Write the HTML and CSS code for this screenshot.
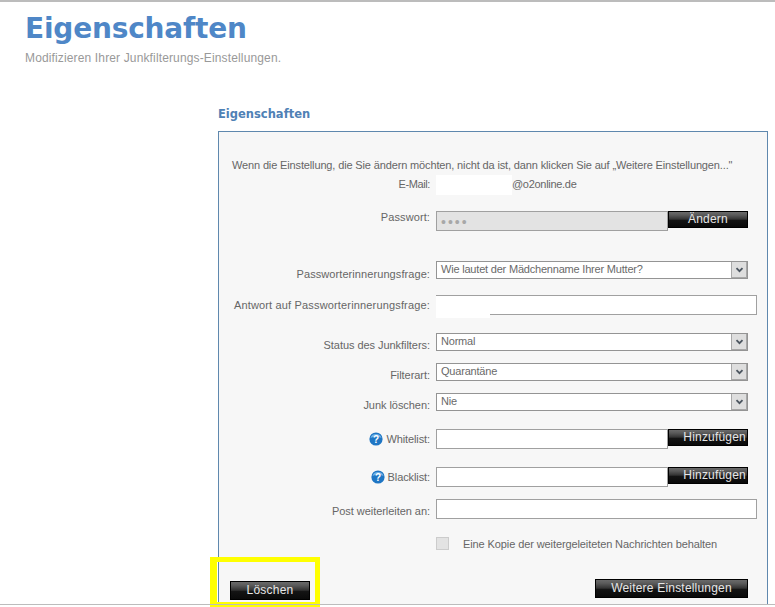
FILE: index.html
```html
<!DOCTYPE html>
<html lang="de">
<head>
<meta charset="utf-8">
<title>Eigenschaften</title>
<link rel="stylesheet" href="styles.css">
</head>
<body>
<header class="page-head">
  <h1>Eigenschaften</h1>
  <p>Modifizieren Ihrer Junkfilterungs-Einstellungen.</p>
</header>
<main class="content">
  <h2>Eigenschaften</h2>
  <form class="panel">
    <p class="intro">Wenn die Einstellung, die Sie ändern möchten, nicht da ist, dann klicken Sie auf „Weitere Einstellungen..."</p>

    <div class="row r-email">
      <label>E-Mail:</label>
      <div class="ctl"><span class="blank-mail"></span><span class="domain">@o2online.de</span></div>
    </div>
    <div class="row r-pass">
      <label>Passwort:</label>
      <div class="ctl"><div class="field short disabled">••••</div><button type="button" class="btn side">Ändern</button></div>
    </div>
    <div class="row r-q">
      <label>Passworterinnerungsfrage:</label>
      <div class="ctl"><div class="select"><span>Wie lautet der Mädchenname Ihrer Mutter?</span><i class="arrow"><svg width="9" height="6" viewBox="0 0 9 6"><path d="M1.5 1.2l3 3 3-3" fill="none" stroke="#4c5660" stroke-width="1.8"/></svg></i></div></div>
    </div>
    <div class="row r-a">
      <label>Antwort auf Passworterinnerungsfrage:</label>
      <div class="ctl"><div class="field wide"></div><span class="blank-answer"></span></div>
    </div>
    <div class="row r-status">
      <label>Status des Junkfilters:</label>
      <div class="ctl"><div class="select"><span>Normal</span><i class="arrow"><svg width="9" height="6" viewBox="0 0 9 6"><path d="M1.5 1.2l3 3 3-3" fill="none" stroke="#4c5660" stroke-width="1.8"/></svg></i></div></div>
    </div>
    <div class="row r-type">
      <label>Filterart:</label>
      <div class="ctl"><div class="select"><span>Quarantäne</span><i class="arrow"><svg width="9" height="6" viewBox="0 0 9 6"><path d="M1.5 1.2l3 3 3-3" fill="none" stroke="#4c5660" stroke-width="1.8"/></svg></i></div></div>
    </div>
    <div class="row r-del">
      <label>Junk löschen:</label>
      <div class="ctl"><div class="select"><span>Nie</span><i class="arrow"><svg width="9" height="6" viewBox="0 0 9 6"><path d="M1.5 1.2l3 3 3-3" fill="none" stroke="#4c5660" stroke-width="1.8"/></svg></i></div></div>
    </div>
    <div class="row r-white">
      <label><svg class="help" width="14" height="14" viewBox="0 0 14 14"><circle cx="7" cy="7" r="6.6" fill="#1f76c4"/><path d="M1.5 6a5.6 5 0 0 1 11 0a9 5 0 0 0-11 0z" fill="#6fb0e6"/><text x="7" y="10.6" text-anchor="middle" class="help-mark">?</text></svg>Whitelist:</label>
      <div class="ctl"><div class="field short"></div><button type="button" class="btn side end">Hinzufügen</button></div>
    </div>
    <div class="row r-black">
      <label><svg class="help" width="14" height="14" viewBox="0 0 14 14"><circle cx="7" cy="7" r="6.6" fill="#1f76c4"/><path d="M1.5 6a5.6 5 0 0 1 11 0a9 5 0 0 0-11 0z" fill="#6fb0e6"/><text x="7" y="10.6" text-anchor="middle" class="help-mark">?</text></svg>Blacklist:</label>
      <div class="ctl"><div class="field short"></div><button type="button" class="btn side end">Hinzufügen</button></div>
    </div>
    <div class="row r-post">
      <label>Post weiterleiten an:</label>
      <div class="ctl"><div class="field wide"></div></div>
    </div>
    <div class="row r-copy">
      <span></span>
      <div class="ctl"><span class="check"></span><span class="copy-text">Eine Kopie der weitergeleiteten Nachrichten behalten</span></div>
    </div>
    <div class="actions">
      <button type="button" class="btn del">Löschen</button>
      <button type="button" class="btn more">Weitere Einstellungen</button>
    </div>
  </form>
</main>
<div class="highlight"></div>
</body>
</html>
```
FILE: styles.css
```css
html, body { margin: 0; padding: 0; }
body {
  position: relative;
  width: 775px;
  height: 607px;
  overflow: hidden;
  background: #fff;
  border-top: 2px solid #bcbcbc;
  box-sizing: border-box;
  font-family: "Liberation Sans", Arial, sans-serif;
  font-size: 11px;
  color: #666;
}
body::after {
  content: "";
  position: absolute;
  left: 0; right: 0;
  top: 602px;
  height: 1px;
  background: #bcbcbc;
}
.page-head { padding: 11px 0 0 25px; height: 89px; box-sizing: border-box; }
.page-head h1 {
  margin: 0;
  font: bold 28px/32px "DejaVu Sans", Verdana, sans-serif;
  letter-spacing: -.2px;
  color: #4f87c7;
}
.page-head p {
  margin: 6px 0 0;
  font-size: 12px;
  line-height: 14px;
  color: #999;
  letter-spacing: .14px;
}
.content { margin-left: 218px; width: 550px; }
.content h2 {
  margin: 14px 0 8px;
  font: bold 11.5px/18px "DejaVu Sans", Verdana, sans-serif;
  color: #4f81b5;
  height: 18px;
}
.panel {
  border: 1px solid #5f88ae;
  border-bottom: 0;
  background: #f7f7f7;
  height: 473px;
  box-sizing: border-box;
  padding: 27px 0 0 0;
  position: relative;
}
.intro { margin: 0 0 0 13px; line-height: 13px; white-space: nowrap; letter-spacing: -.14px; }
.row { display: grid; grid-template-columns: 211px 1fr; column-gap: 6px; }
.row label { text-align: right; white-space: nowrap; letter-spacing: -.05px; }
.ctl { display: flex; position: relative; }
.r-email { margin-top: 3px; height: 20px; }
.row.r-email label { padding-top: 3px; letter-spacing: -.4px; }
.blank-mail { width: 76px; height: 20px; background: #fff; }
.domain { padding-top: 3px; letter-spacing: -.3px; }
.r-pass { margin-top: 16px; }
.row.r-pass label { letter-spacing: .1px; }
.field {
  height: 20px;
  box-sizing: border-box;
  background: #fff;
  border: 1px solid #a0a0a0;
}
.short { width: 232px; }
.wide { width: 321px; }
.disabled {
  background: #e3e3e3;
  color: #a8a8a8;
  font-size: 14px;
  line-height: 20px;
  padding-left: 4px;
  letter-spacing: 2px;
}
.btn {
  display: block;
  margin: 0;
  padding: 0;
  border: 1px solid #000;
  background: linear-gradient(#6a6a6a 0, #5a5a5a 20%, #333 48%, #141414 55%, #0a0a0a 100%);
  color: #e6e6e6;
  font: 12px/15px "Liberation Sans", Arial, sans-serif;
  letter-spacing: .2px;
  text-align: center;
  box-sizing: border-box;
}
.side { width: 80px; height: 17px; }
.end { text-align: right; padding-right: 1px; }
.r-q { margin-top: 30px; }
.row.r-q label { padding-top: 7px; letter-spacing: .08px; }
.select {
  width: 312px;
  height: 18px;
  box-sizing: border-box;
  border: 1px solid #949494;
  background: #fff;
  display: flex;
  justify-content: space-between;
  padding-left: 4px;
  line-height: 14px;
  color: #6a6a6a;
}
.select span { letter-spacing: -.2px; }
.arrow {
  width: 16px;
  height: 16px;
  background: #dedede;
  border: 1px solid #a8a8a8;
  border-width: 0 1px 1px 1px;
  box-sizing: border-box;
  display: flex;
  align-items: center;
  justify-content: center;
}
.r-a { margin-top: 15px; }
.row.r-a label { padding-top: 4px; letter-spacing: .16px; }
.blank-answer {
  position: absolute;
  left: 0; top: 1px;
  width: 54px;
  height: 22px;
  background: #fff;
}
.r-status { margin-top: 18px; }
.r-status label { padding-top: 6px; }
.r-type { margin-top: 12px; }
.r-type label { padding-top: 6px; }
.r-del { margin-top: 12px; }
.r-del label { padding-top: 6px; }
.r-white { margin-top: 18px; }
.r-white label { padding-top: 3px; }
.r-black { margin-top: 18px; }
.r-black label { padding-top: 3px; }
.row.r-white label, .row.r-black label { letter-spacing: -.1px; }
.help { vertical-align: -3px; margin-right: 3px; }
.help-mark { font: bold 10px "Liberation Sans", Arial, sans-serif; fill: #fff; }
.r-post { margin-top: 12px; }
.r-post label { padding-top: 6px; }
.r-copy { margin-top: 18px; }
.check {
  width: 13px;
  height: 13px;
  box-sizing: border-box;
  border: 1px solid #ccc;
  background: #e3e3e3;
}
.copy-text { margin-left: 14px; line-height: 14px; letter-spacing: -.1px; }
.actions {
  display: flex;
  justify-content: space-between;
  align-items: flex-start;
  margin: 28px 19px 0 11px;
}
.del { width: 80px; height: 19px; margin-top: 2px; }
.more { width: 153px; height: 19px; }
.highlight {
  position: absolute;
  left: 210px;
  top: 555px;
  width: 110px;
  height: 50px;
  box-sizing: border-box;
  border: 5px solid #ffff00;
  border-left-width: 7px;
}
```
